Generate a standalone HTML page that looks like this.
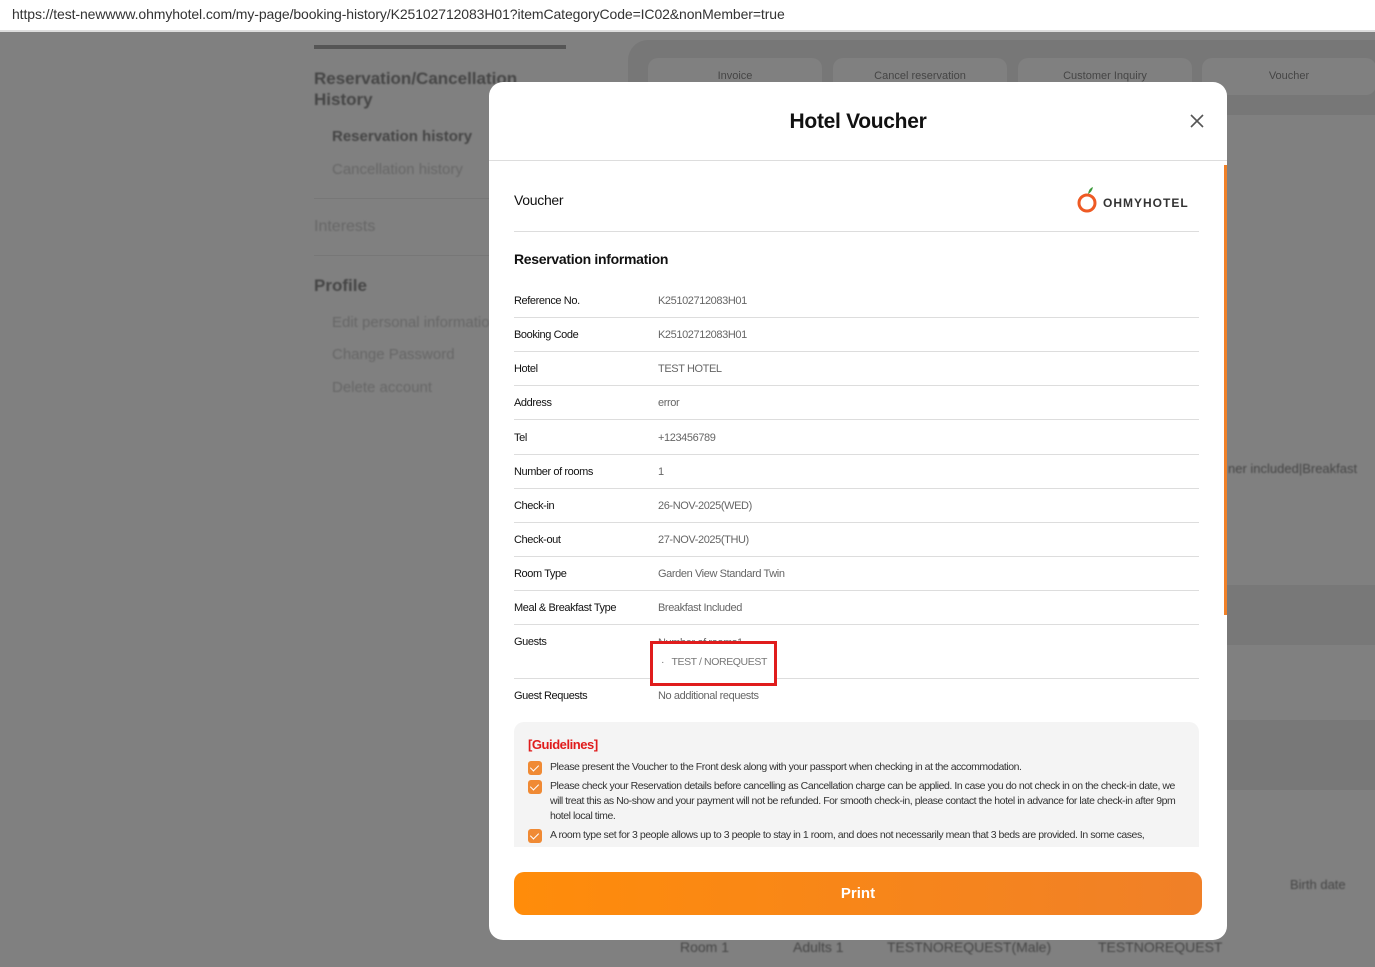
<!DOCTYPE html>
<html><head><meta charset="utf-8"><style>
*{margin:0;padding:0;box-sizing:border-box}
body{width:1375px;height:967px;overflow:hidden;background:#808080;font-family:"Liberation Sans",sans-serif;position:relative}
.url{position:absolute;left:0;top:0;width:1375px;height:32px;background:#fff;border-bottom:2px solid #ddd;font-size:14px;color:#333;padding:6px 12px;letter-spacing:-0.1px}
.bg{position:absolute;color:#454545;filter:blur(0.8px)}
.modal{position:absolute;left:489px;top:82px;width:738px;height:858px;background:#fff;border-radius:14px;overflow:hidden}
.hd{height:79px;border-bottom:1px solid #ddd;text-align:center;font-weight:bold;font-size:21px;line-height:79px;color:#111;position:relative;letter-spacing:-0.3px}
.x{position:absolute;right:22px;top:31px;width:16px;height:16px}
.row{position:absolute;left:25px;width:685px;border-bottom:1px solid #ddd;font-size:11px;color:#111;height:34px;line-height:34px;letter-spacing:-0.4px}
.row .v{position:absolute;left:144px;top:0;color:#666}
.gl{position:absolute;left:25px;top:640px;width:685px;height:140px;background:#f4f4f4;border-radius:10px 10px 0 0;padding:15px 14px;font-size:10.5px;color:#333;letter-spacing:-0.45px;line-height:15px}
.gl .t{color:#e01c1c;font-size:13px;font-weight:bold;margin-bottom:8px}
.it{position:relative;padding-left:22px;margin-bottom:4px}
.ck{position:absolute;left:0;top:1px;width:14px;height:14px;border-radius:3px;background:#f08a34}
.ck:after{content:"";position:absolute;left:4px;top:2px;width:4px;height:7px;border:solid #fff;border-width:0 1.5px 1.5px 0;transform:rotate(45deg)}
.btn{position:absolute;left:25px;top:790px;width:688px;height:43px;border-radius:10px;background:linear-gradient(90deg,#ff8c0a,#f08028);color:#fff;font-weight:bold;font-size:15px;text-align:center;line-height:43px}
.tab{position:absolute;top:58px;width:174px;height:37px;background:#808080;border-radius:10px;font-size:11px;color:#454545;text-align:center;line-height:37px}
</style></head><body>
<div class="url">https://test-newwww.ohmyhotel.com/my-page/booking-history/K25102712083H01?itemCategoryCode=IC02&amp;nonMember=true</div>
<div style="position:absolute;left:314px;top:45px;width:252px;height:4px;background:#555"></div>
<div class="bg" style="left:314px;top:68px;font-size:17px;font-weight:bold;line-height:21px">Reservation/Cancellation<br>History</div>
<div class="bg" style="left:332px;top:128px;font-size:15px;font-weight:bold">Reservation history</div>
<div class="bg" style="left:332px;top:161px;font-size:15px;color:#666">Cancellation history</div>
<div style="position:absolute;left:314px;top:198px;width:180px;height:1px;background:#777"></div>
<div class="bg" style="left:314px;top:218px;font-size:16px;color:#666">Interests</div>
<div style="position:absolute;left:314px;top:255px;width:180px;height:1px;background:#777"></div>
<div class="bg" style="left:314px;top:276px;font-size:17px;font-weight:bold">Profile</div>
<div class="bg" style="left:332px;top:314px;font-size:15px;color:#666">Edit personal information</div>
<div class="bg" style="left:332px;top:346px;font-size:15px;color:#666">Change Password</div>
<div class="bg" style="left:332px;top:379px;font-size:15px;color:#666">Delete account</div>
<div style="position:absolute;left:628px;top:40px;width:760px;height:75px;background:#777;border-radius:20px 0 0 0"></div>
<div class="tab" style="left:648px">Invoice</div>
<div class="tab" style="left:833px">Cancel reservation</div>
<div class="tab" style="left:1018px">Customer Inquiry</div>
<div class="tab" style="left:1202px">Voucher</div>
<div class="bg" style="left:1228px;top:461px;font-size:13px">ner included|Breakfast</div>
<div style="position:absolute;left:1227px;top:585px;width:148px;height:60px;background:#787878"></div>
<div style="position:absolute;left:1227px;top:720px;width:148px;height:70px;background:#787878"></div>
<div class="bg" style="left:1290px;top:877px;font-size:13px">Birth date</div>
<div class="bg" style="left:680px;top:939px;font-size:14px">Room 1</div>
<div class="bg" style="left:793px;top:939px;font-size:14px">Adults 1</div>
<div class="bg" style="left:887px;top:939px;font-size:14px">TESTNOREQUEST(Male)</div>
<div class="bg" style="left:1098px;top:939px;font-size:14px">TESTNOREQUEST</div>
<div class="modal">
<div class="hd">Hotel Voucher
<svg class="x" viewBox="0 0 16 16"><path d="M2 2L14 14M14 2L2 14" stroke="#555" stroke-width="1.6"/></svg></div>
<div style="position:absolute;right:0;top:83px;width:3px;height:450px;background:#f08028"></div>
<div style="position:absolute;left:25px;top:80px;width:685px;height:70px;border-bottom:1px solid #ddd">
<div style="position:absolute;left:0;top:30px;font-size:14px;color:#111;letter-spacing:-0.3px">Voucher</div>
<svg style="position:absolute;left:562px;top:22px" width="24" height="30" viewBox="0 0 24 30"><circle cx="11" cy="19" r="8" fill="none" stroke="#ee5a24" stroke-width="3"/><path d="M12 10 Q13 4 17 3 Q16 8 12 10Z" fill="#3a9a3a"/></svg>
<div style="position:absolute;left:589px;top:34px;font-size:12px;font-weight:bold;color:#333;letter-spacing:1px">OHMYHOTEL</div>
</div>
<div style="position:absolute;left:25px;top:169px;font-size:14px;font-weight:bold;color:#111;letter-spacing:-0.3px">Reservation information</div>
<div class="row" style="top:202px">Reference No.<span class="v">K25102712083H01</span></div>
<div class="row" style="top:236px">Booking Code<span class="v">K25102712083H01</span></div>
<div class="row" style="top:270px">Hotel<span class="v">TEST HOTEL</span></div>
<div class="row" style="top:304px">Address<span class="v">error</span></div>
<div class="row" style="top:339px">Tel<span class="v">+123456789</span></div>
<div class="row" style="top:373px">Number of rooms<span class="v">1</span></div>
<div class="row" style="top:407px">Check-in<span class="v">26-NOV-2025(WED)</span></div>
<div class="row" style="top:441px">Check-out<span class="v">27-NOV-2025(THU)</span></div>
<div class="row" style="top:475px">Room Type<span class="v">Garden View Standard Twin</span></div>
<div class="row" style="top:509px">Meal &amp; Breakfast Type<span class="v">Breakfast Included</span></div>
<div class="row" style="top:543px;height:54px">Guests<span class="v" style="line-height:16px;top:10px">Number of rooms1</span></div>
<div style="position:absolute;left:161px;top:559px;width:127px;height:45px;border:3px solid #e01c1c;background:#fff;font-size:10.5px;color:#777;padding:12px 0 0 8px;letter-spacing:-0.4px">·&nbsp;&nbsp; TEST / NOREQUEST</div>
<div class="row" style="top:597px;border:none">Guest Requests<span class="v">No additional requests</span></div>
<div class="gl"><div class="t">[Guidelines]</div>
<div class="it"><span class="ck"></span>Please present the Voucher to the Front desk along with your passport when checking in at the accommodation.</div>
<div class="it" style="padding-right:8px"><span class="ck"></span>Please check your Reservation details before cancelling as Cancellation charge can be applied. In case you do not check in on the check-in date, we will treat this as No-show and your payment will not be refunded. For smooth check-in, please contact the hotel in advance for late check-in after 9pm hotel local time.</div>
<div class="it"><span class="ck"></span>A room type set for 3 people allows up to 3 people to stay in 1 room, and does not necessarily mean that 3 beds are provided. In some cases,</div>
</div>
<div style="position:absolute;left:0;top:765px;width:738px;height:20px;background:#fff"></div>
<div class="btn">Print</div>
</div>
</body></html>
